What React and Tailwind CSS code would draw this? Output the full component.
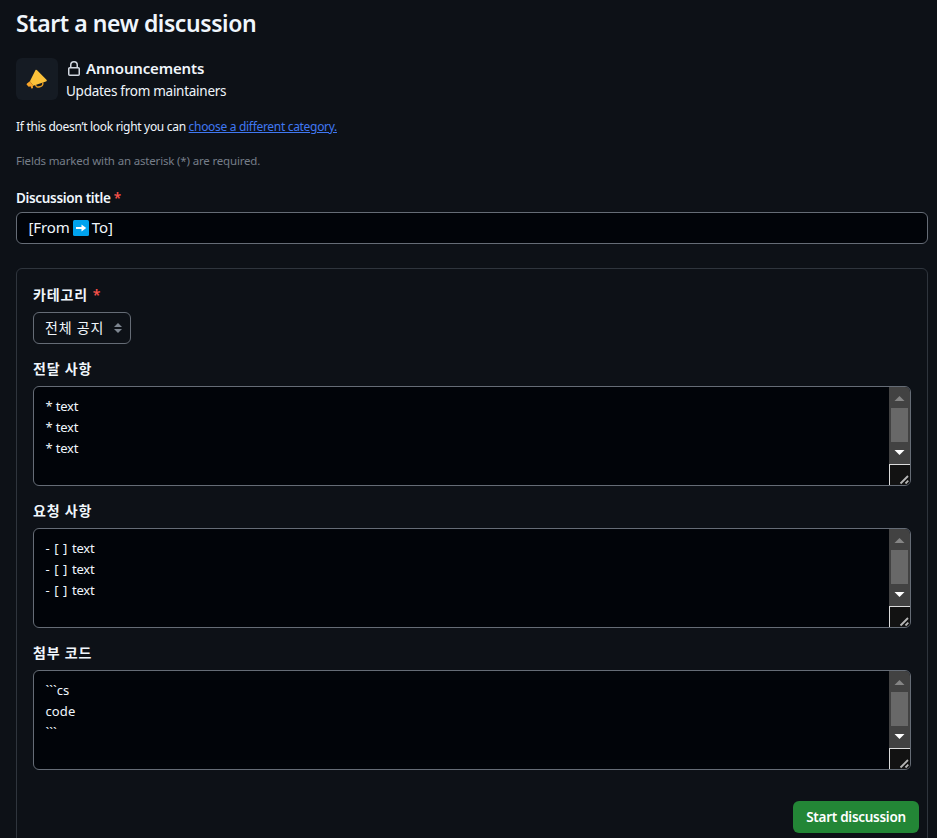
import React from "react";

const sections = [
  { label: "전달 사항", lines: ["* text", "* text", "* text"], tracking: "tracking-[-0.2px]" },
  { label: "요청 사항", lines: ["- [ ] text", "- [ ] text", "- [ ] text"], tracking: "tracking-[-0.2px] [word-spacing:1.6px]" },
  { label: "첨부 코드", lines: ["```cs", "code", "```"], tracking: "tracking-[0.1px]" },
];

function Megaphone() {
  return (
    <svg width="22" height="22" viewBox="0 0 22 22" fill="none">
      <path d="M9.500 16.500c.2 2.600 2.200 2.800 4.300 2.300 2.300-.6 3.600-1.800 2.900-4.300" stroke="#e59a20" strokeWidth="1.400" />
      <path d="M9.400 2.300c.5-.7 1.200-.6 1.700 0l9.400 9.500c.6.700.3 1.600-.6 1.800L7.300 17.800l-3.400-4.600z" fill="#fcc23a" />
      <path d="M3.900 13.200 1 15.400c-.6.500-.4 1.100 0 1.500l1.400 1.500c.4.400.9.400 1.300.1l.5-.4 1.500 2.600 1.300-.8-.2-1.700.5-.4z" fill="#f9a429" />
    </svg>
  );
}

function Lock() {
  return (
    <svg width="16" height="16" viewBox="0 0 16 16" fill="#d1d7e0">
      <path d="M4 4a4 4 0 0 1 8 0v2h.25c.966 0 1.750.784 1.750 1.750v5.500A1.750 1.750 0 0 1 12.250 15h-8.500A1.750 1.750 0 0 1 2 13.250v-5.500C2 6.784 2.784 6 3.750 6H4Zm8.250 3.500h-8.500a.25.25 0 0 0-.25.25v5.500c0 .138.112.25.25.25h8.500a.25.25 0 0 0 .25-.25v-5.500a.25.25 0 0 0-.25-.25ZM10.500 6V4a2.500 2.500 0 1 0-5 0v2Z" />
    </svg>
  );
}

function ArrowTile() {
  return (
    <svg width="16" height="16" viewBox="0 0 16 16" className="ml-[3px] mr-[3px] shrink-0">
      <rect width="16" height="16" rx="1.500" fill="#00a3ee" />
      <path d="M3 8h8" stroke="#fff" strokeWidth="2" />
      <path d="M8.500 4.500 13.200 8l-4.700 3.500z" fill="#fff" />
    </svg>
  );
}

function Scrollbar() {
  return (
    <div className="flex w-[21px] shrink-0 flex-col bg-[#424242]">
      <svg width="21" height="21" viewBox="0 0 21 21"><path d="M5.500 14 10.500 9l5 5z" fill="#858585" /></svg>
      <div className="mx-[2px] h-[34px] bg-[#686868]" />
      <svg width="21" height="22" viewBox="0 0 21 22"><path d="M5.500 8h10l-5 5z" fill="#fff" /></svg>
      <div className="flex-1 border-l border-t border-[#dcdcdc] bg-[#121212]">
        <svg width="20" height="20" viewBox="0 0 20 20" stroke="#b5b5b5" strokeWidth="1.800">
          <path d="m10.500 18.500 7.500-7.500M15.500 18.500l2.800-2.800" />
        </svg>
      </div>
    </div>
  );
}

function TextArea({ label, lines, tracking }) {
  return (
    <section className="mb-4">
      <div className="flex h-[26px] items-start text-[14px] font-bold leading-[18px] tracking-[0.8px]">{label}</div>
      <div className="flex h-[100px] w-[878px] overflow-hidden rounded-md border border-[#656c76] bg-[#010409]">
        <div className={`flex-1 whitespace-pre pl-[11.500px] pt-[9px] text-[13px] leading-[21px] ${tracking}`}>
          {lines.map((line, i) => <div key={i}>{line}</div>)}
        </div>
        <Scrollbar />
      </div>
    </section>
  );
}

export default function App() {
  return (
    <main className="h-[838px] w-[937px] overflow-hidden whitespace-nowrap bg-[#0d1117] px-4 font-['Noto_Sans','Noto_Sans_CJK_KR',sans-serif] text-[#f0f6fc]">
      <h1 className="pt-[7px] text-[23px] font-semibold leading-8 tracking-[-0.42px]">Start a new discussion</h1>
      <div className="mt-[19px] flex gap-2">
        <div className="flex size-[42px] items-center justify-center rounded-md bg-[#151b23]"><Megaphone /></div>
        <div>
          <div className="flex h-[22px] items-center gap-1 text-[15px] font-semibold tracking-[-0.15px]"><Lock /><span className="relative -top-px">Announcements</span></div>
          <div className="text-[13.500px] leading-[22px] tracking-[-0.27px]">Updates from maintainers</div>
        </div>
      </div>
      <p className="mt-4 text-[12px] leading-[18px] tracking-[-0.31px]">
        If this doesn’t look right you can <a className="text-[#4078f2] underline">choose a different category.</a>
      </p>
      <p className="mt-4 text-[11.500px] leading-[18px] tracking-[-0.17px] text-[#767e89]">Fields marked with an asterisk (*) are required.</p>
      <div className="mt-[19px] h-[23px] text-[13.500px] font-semibold leading-[18px] tracking-[-0.33px]">Discussion title <span className="text-[#f85149]">*</span></div>
      <div className="flex h-8 w-[912px] items-center rounded-md border border-[#656c76] bg-[#010409] pl-[11.500px] text-[15px]">
        <span className="relative -top-px tracking-[-0.1px]">[From</span><ArrowTile /><span className="relative -top-px">To]</span>
      </div>
      <div className="mt-6 h-[600px] w-[912px] rounded-md border border-[#2f353d] px-4 pt-[17px]">
        <div className="h-[26px] text-[14px] font-bold leading-[18px] tracking-[0.9px]">카테고리 <span className="font-semibold text-[#f85149]">*</span></div>
        <div className="mb-4 flex h-8 w-[98px] items-center justify-between rounded-md border border-[#656c76] pl-[11px] pr-2 text-[14px]">
          <span className="relative -top-px tracking-[0.8px]">전체 공지</span>
          <svg width="8" height="10" viewBox="0 0 8 10" fill="#7d8590"><path d="M0 4 4 0l4 4zM0 6h8l-4 4z" /></svg>
        </div>
        {sections.map((section) => <TextArea key={section.label} {...section} />)}
        <div className="-mr-2 mt-[31px] flex justify-end">
          <button className="h-8 w-[126px] rounded-md bg-[#238636] text-[13.500px] font-semibold tracking-[-0.28px] text-white">Start discussion</button>
        </div>
      </div>
    </main>
  );
}
